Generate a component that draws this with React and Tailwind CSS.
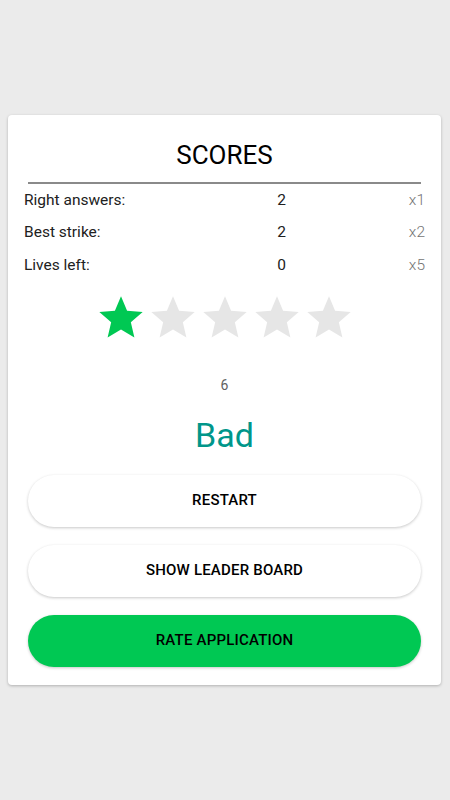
import React from 'react';

const rows = [
    { label: 'Right answers:', value: 2, mult: 'x1' },
    { label: 'Best strike:', value: 2, mult: 'x2' },
    { label: 'Lives left:', value: 0, mult: 'x5' },
];

function Star({ filled }) {
    return (
        <svg viewBox="0 0 24 24" className="w-[52px] h-[52px]">
            <path
                d="M12 17.27L18.18 21l-1.64-7.03L22 9.24l-7.19-.61L12 2 9.19 8.63 2 9.24l5.46 4.73L5.82 21z"
                fill={filled ? '#00c853' : '#e6e6e6'}
            />
        </svg>
    );
}

export default function App() {
    const rating = 1;

    return (
        <div className="min-h-[800px] bg-[#ebebeb] pt-[115px] px-2" style={{ fontFamily: 'Roboto, sans-serif' }}>
            <div className="bg-white rounded-[4px] shadow-[0_1px_3px_rgba(0,0,0,0.25)] px-4 pt-[24px] pb-[18px] w-[433px]">
                {/* Title */}
                <h1 className="text-center text-[26px] leading-[32px] text-black">SCORES</h1>
                <div className="mx-1 mt-[11px] h-[2px] bg-[#8a8a8a]" />

                {/* Score rows */}
                <div>
                    {rows.map((row) => (
                        <div key={row.label} className="grid grid-cols-3 items-center h-[32.5px] text-[15.5px] text-[#212121]">
                            <span>{row.label}</span>
                            <span className="text-center translate-x-[57px]">{row.value}</span>
                            <span className="text-right text-[#757575] font-light">{row.mult}</span>
                        </div>
                    ))}
                </div>

                {/* Stars */}
                <div className="flex justify-center mt-[10px]">
                    {[1, 2, 3, 4, 5].map((i) => (
                        <Star key={i} filled={i <= rating} />
                    ))}
                </div>

                <p className="text-center text-[14px] text-[#616161] mt-[31px] leading-[20px]">6</p>
                <p className="text-center text-[34px] leading-[40px] text-[#00968a] mt-[20px]">Bad</p>

                {/* Actions */}
                <div className="mx-1 mt-[20px] flex flex-col gap-[18px]">
                    <button className="h-[52px] rounded-full bg-white text-[15px] font-medium tracking-[0.2px] text-black shadow-[0_1px_3px_rgba(0,0,0,0.22)]">
                        RESTART
                    </button>
                    <button className="h-[52px] rounded-full bg-white text-[15px] font-medium tracking-[0.2px] text-black shadow-[0_1px_3px_rgba(0,0,0,0.22)]">
                        SHOW LEADER BOARD
                    </button>
                    <button className="h-[52px] rounded-full bg-[#00c853] text-[15px] font-medium tracking-[0.2px] text-black shadow-[0_1px_3px_rgba(0,0,0,0.22)]">
                        RATE APPLICATION
                    </button>
                </div>
            </div>
        </div>
    );
}
